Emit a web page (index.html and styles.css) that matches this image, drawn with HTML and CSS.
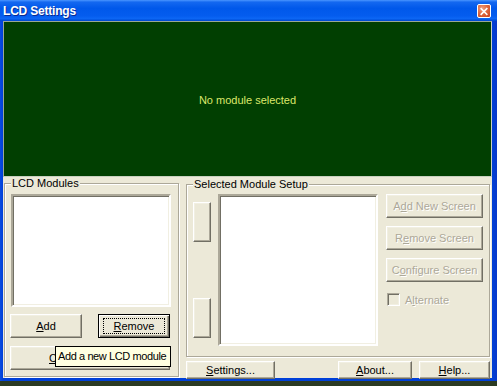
FILE: index.html
```html
<!DOCTYPE html>
<html>
<head>
<meta charset="utf-8">
<link rel="stylesheet" href="styles.css">
</head>
<body>
<div class="window">
  <div class="titlebar">
    <span class="title">LCD Settings</span>
    <span class="close"><svg width="13" height="13" viewBox="0 0 13 13"><path d="M3.5 3.5 L9.5 9.5 M9.5 3.5 L3.5 9.5" stroke="#fff" stroke-width="1.8" stroke-linecap="square"/></svg></span>
  </div>
  <div class="frame">
    <div class="client">
      <div class="lcd"><span>No module selected</span></div>
      <div class="lower">
        <div class="group modules">
          <span class="glabel">LCD Modules</span>
          <div class="listbox list-modules"></div>
          <div class="btnrow">
            <div class="btn w72"><span><u>A</u>dd</span></div>
            <div class="btn w72 default"><span class="focus"><u>R</u>emove</span></div>
          </div>
          <div class="btn wide"><span class="left"><u>C</u>onfigure</span></div>
          <div class="tooltip">Add a new LCD module</div>
        </div>
        <div class="rightcol">
          <div class="group setup">
            <span class="glabel">Selected Module Setup</span>
            <div class="smallcol">
              <div class="btn small"></div>
              <div class="btn small second"></div>
            </div>
            <div class="listbox list-screens"></div>
            <div class="screencol">
              <div class="btn screen disabled"><span>A<u>d</u>d New Screen</span></div>
              <div class="btn screen disabled"><span>R<u>e</u>move Screen</span></div>
              <div class="btn screen disabled"><span>C<u>o</u>nfigure Screen</span></div>
              <div class="checkrow disabled"><span class="check"></span><span>A<u>l</u>ternate</span></div>
            </div>
          </div>
          <div class="bottomrow">
            <div class="btn bsettings"><span><u>S</u>ettings...</span></div>
            <div class="btn babout"><span><u>A</u>bout...</span></div>
            <div class="btn bhelp"><span><u>H</u>elp...</span></div>
          </div>
        </div>
      </div>
    </div>
  </div>
</div>
</body>
</html>
```
FILE: styles.css
```css
* { box-sizing: border-box; }
html, body { margin: 0; padding: 0; }
body {
  width: 497px;
  height: 386px;
  background: #2b3a22;
  font-family: "Liberation Sans", Arial, sans-serif;
  font-size: 11px;
  color: #000;
  overflow: hidden;
}
.window {
  width: 497px;
  height: 381px;
  display: flex;
  flex-direction: column;
}
.titlebar {
  height: 21px;
  display: flex;
  align-items: center;
  justify-content: space-between;
  padding: 0 6px 0 3px;
  background: linear-gradient(to bottom, #4a95ff 0%, #1468f0 10%, #0058ea 40%, #045cee 75%, #0c66f4 88%, #0052dc 96%, #0045cc 100%);
}
.title {
  color: #fff;
  font-weight: bold;
  font-size: 12px;
  letter-spacing: -0.2px;
  text-shadow: 1px 1px 0 #0a2a90;
}
.close {
  width: 14px;
  height: 14px;
  display: flex;
  align-items: center;
  justify-content: center;
  background: radial-gradient(circle at 35% 30%, #f0a080 0%, #e06a40 45%, #c8401c 100%);
  border: 1px solid #fff;
  border-radius: 2px;
  margin-top: 1px;
}
.frame {
  flex: 1;
  padding: 0 5px 3px 3px;
  background: linear-gradient(to right, #0a4ce0 0px, #0040d8 3px, #0040d8 492px, #0838c8 100%);
}
.client {
  height: 357px;
  background: #ece9d8;
}
.lcd {
  height: 156px;
  background: #013f01;
  border: 1px solid #9aa894;
  border-right-color: #c8d0c0;
  border-bottom-color: #c8d0c0;
  display: flex;
  align-items: center;
  justify-content: center;
  color: #dde86a;
  padding-top: 2px;
}
.lower {
  display: flex;
  padding: 6px 0 0 1px;
}
.group {
  position: relative;
  border: 1px solid #aca899;
  box-shadow: inset 1px 1px #fff, 1px 1px #fff;
}
.glabel {
  position: absolute;
  top: -7px;
  left: 6px;
  padding: 0 1px;
  background: #ece9d8;
  line-height: 13px;
}
.modules {
  width: 175px;
  height: 194px;
  padding: 10px 0 0 5px;
}
.listbox {
  background: #fff;
  border: 2px solid;
  border-color: #aca899 #fff #fff #aca899;
  box-shadow: inset 1px 1px #716f64, inset -1px -1px #f1efe2;
}
.list-modules {
  width: 160px;
  height: 113px;
  margin-left: 1px;
}
.btn {
  background: #ece9d8;
  border: 1px solid;
  border-color: #fff #716f64 #716f64 #fff;
  box-shadow: inset -1px -1px #aca899, inset 1px 1px #f1efe2;
  display: flex;
  align-items: center;
  justify-content: center;
  height: 24px;
  white-space: nowrap;
}
.btnrow {
  display: flex;
  gap: 16px;
  margin-top: 7px;
}
.w72 { width: 72px; }
.btn.default {
  border: 1px solid #000;
  box-shadow: inset 1px 1px #fff, inset -1px -1px #716f64, inset -2px -2px #aca899;
}
.focus {
  border: 1px dotted #000;
  width: 62px;
  height: 16px;
  display: flex;
  align-items: center;
  justify-content: center;
}
.btn.wide {
  width: 160px;
  margin-top: 8px;
  justify-content: flex-start;
  overflow: hidden;
}
.left { padding-left: 38px; }
.tooltip {
  position: absolute;
  left: 50px;
  top: 162px;
  width: 116px;
  height: 21px;
  background: #ffffe1;
  border: 1px solid #000;
  padding-left: 2px;
  line-height: 19px;
  font-size: 11px;
  letter-spacing: -0.4px;
  white-space: nowrap;
  overflow: hidden;
}
.rightcol {
  margin-left: 7px;
  width: 305px;
  display: flex;
  flex-direction: column;
}
.setup {
  width: 304px;
  height: 173px;
  margin-top: 1px;
  display: flex;
  align-items: flex-start;
  padding: 9px 0 0 6px;
}
.smallcol {
  width: 18px;
  display: flex;
  flex-direction: column;
  padding-top: 8px;
  gap: 56px;
}
.btn.small {
  width: 18px;
  height: 40px;
}
.list-screens {
  width: 160px;
  height: 152px;
  margin-left: 7px;
}
.screencol {
  margin-left: 8px;
  width: 97px;
  display: flex;
  flex-direction: column;
  gap: 8px;
}
.btn.screen { width: 97px; }
.disabled { color: #aca899; text-shadow: 1px 1px 0 #fff; }
.checkrow {
  display: flex;
  align-items: center;
  margin-top: 3px;
  margin-left: 1px;
  height: 13px;
}
.check {
  width: 13px;
  height: 13px;
  margin-right: 5px;
  border: 1px solid;
  border-color: #aca899 #fff #fff #aca899;
  box-shadow: inset 1px 1px #716f64, inset -1px -1px #f1efe2;
  background: #ece9d8;
}
.bottomrow {
  display: flex;
  margin-top: 4px;
}
.bottomrow .btn { height: 18px; }
.bsettings { width: 89px; }
.babout { width: 74px; margin-left: 63px; }
.bhelp { width: 71px; margin-left: 7px; }
```
